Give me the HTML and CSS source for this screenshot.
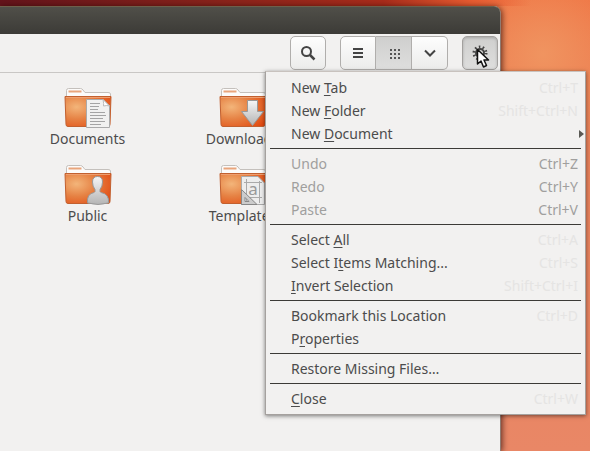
FILE: index.html
```html
<!DOCTYPE html>
<html lang="en">
<head>
    <meta charset="UTF-8">
    <meta name="viewport" content="width=device-width, initial-scale=1.0">
    <title>Files</title>
    <link rel="stylesheet" href="styles.css">
</head>
<body>
    <!-- shared folder shape and its gradients -->
    <svg class="defs" width="0" height="0" aria-hidden="true">
        <defs>
            <radialGradient id="orange" cx="0.25" cy="0.35" r="0.9">
                <stop offset="0" stop-color="#f3b57a"/>
                <stop offset="0.45" stop-color="#e68244"/>
                <stop offset="1" stop-color="#e2480f"/>
            </radialGradient>
            <linearGradient id="silver" x1="0" y1="0" x2="0" y2="1">
                <stop offset="0" stop-color="#f6f6f6"/>
                <stop offset="1" stop-color="#b4b4b4"/>
            </linearGradient>
            <symbol id="folder" viewBox="0 0 48 42">
                <path d="M2.500 10V3.500Q2.500 1.500 4.500 1.500H16.500Q18 1.500 19 3L21 5.500H44Q46.500 5.500 46.500 7V12H2.500Z" fill="#fcfbfa" stroke="#c4c0bc"/>
                <path d="M4.500 4.500h13" stroke="#e9a57c" stroke-width="2"/>
                <path d="M1 9.500H47L46 37.500Q46 39.500 44 39.500H4Q2 39.500 2 37.500Z" fill="url(#orange)" stroke="#c2602f"/>
                <path d="M2 10.500H46" stroke="#ee9f70"/>
            </symbol>
        </defs>
    </svg>

    <div class="window">
        <header class="titlebar"></header>

        <div class="toolbar">
            <button class="tool" aria-label="Search">
                <svg width="16" height="16" viewBox="0 0 16 16" fill="none" stroke="#444">
                    <circle cx="6.500" cy="6.500" r="4.500" stroke-width="2"/>
                    <path d="M10 10l4.500 4.500" stroke-width="2.500"/>
                </svg>
            </button>
            <div class="tool-group">
                <button class="tool" aria-label="List view">
                    <svg width="16" height="16" viewBox="0 0 16 16" fill="#444">
                        <path d="M3 3h10v2H3zM3 7h10v2H3zM3 11h10v2H3z"/>
                    </svg>
                </button>
                <button class="tool pressed" aria-label="Icon view">
                    <svg width="16" height="16" viewBox="0 0 16 16" fill="#555">
                        <path d="M4 4h2v2H4zM8 4h2v2H8zM12 4h2v2h-2zM4 8h2v2H4zM8 8h2v2H8zM12 8h2v2h-2zM4 12h2v2H4zM8 12h2v2H8zM12 12h2v2h-2z"/>
                    </svg>
                </button>
                <button class="tool" aria-label="View options">
                    <svg width="16" height="16" viewBox="0 0 16 16" fill="none" stroke="#444" stroke-width="2">
                        <path d="M3 5.500l5 5 5-5"/>
                    </svg>
                </button>
            </div>
            <div class="menu-anchor">
                <button class="tool pressed sunken" aria-label="Settings" aria-expanded="true">
                    <svg width="16" height="16" viewBox="0 0 16 16" fill="none" stroke="#444">
                        <circle cx="8" cy="8" r="4" stroke-width="2"/>
                        <circle cx="8" cy="8" r="6" stroke-width="3" stroke-dasharray="1.500 2.270"/>
                    </svg>
                </button>
                <svg class="pointer" width="14" height="21" viewBox="0 0 14 21">
                    <path d="M1.500 1.500V16L5 13L7.500 19L10.500 17.500L8 12H12.500Z" fill="#fff" stroke="#111" stroke-width="1.500" stroke-linejoin="round"/>
                </svg>

                <div class="menu">
                    <ul>
                        <li><button><span>New <u>T</u>ab</span><kbd>Ctrl+T</kbd></button></li>
                        <li><button><span>New <u>F</u>older</span><kbd>Shift+Ctrl+N</kbd></button></li>
                        <li><button><span>New <u>D</u>ocument</span><i class="submenu"></i></button></li>
                    </ul>
                    <ul>
                        <li><button disabled><span>Undo</span><kbd>Ctrl+Z</kbd></button></li>
                        <li><button disabled><span>Redo</span><kbd>Ctrl+Y</kbd></button></li>
                        <li><button disabled><span>Paste</span><kbd>Ctrl+V</kbd></button></li>
                    </ul>
                    <ul>
                        <li><button><span>Select <u>A</u>ll</span><kbd>Ctrl+A</kbd></button></li>
                        <li><button><span>Select I<u>t</u>ems Matching...</span><kbd>Ctrl+S</kbd></button></li>
                        <li><button><span><u>I</u>nvert Selection</span><kbd>Shift+Ctrl+I</kbd></button></li>
                    </ul>
                    <ul>
                        <li><button><span>Bookmark this Location</span><kbd>Ctrl+D</kbd></button></li>
                        <li><button><span>P<u>r</u>operties</span></button></li>
                    </ul>
                    <ul>
                        <li><button><span>Restore Missing Files…</span></button></li>
                    </ul>
                    <ul>
                        <li><button><span><u>C</u>lose</span><kbd>Ctrl+W</kbd></button></li>
                    </ul>
                </div>
            </div>
        </div>

        <main class="files">
            <a class="file" href="#documents">
                <svg width="48" height="42" viewBox="0 0 48 42">
                    <use href="#folder"/>
                    <path d="M22.500 12.500H39L45.500 19V40.500H22.500Z" fill="#f1f1f0" stroke="#aaa"/>
                    <path d="M39 12.500Q40 17 39.500 19Q43 18 45.500 19Z" fill="#fff" stroke="#bbb"/>
                    <path d="M26 16.500h10M26 19.500h9M26 22.500h8M26 25.500h15M26 28.500h16M26 31.500h13M26 34.500h15M26 37.500h11" stroke="#a4a4a4"/>
                </svg>
                <span>Documents</span>
            </a>
            <a class="file" href="#downloads">
                <svg width="48" height="42" viewBox="0 0 48 42">
                    <use href="#folder"/>
                    <path d="M28.500 13.500H38.500V24.500H44.500L33.500 38.500L22.500 24.500H28.500Z" fill="url(#silver)" stroke="#999"/>
                </svg>
                <span>Downloads</span>
            </a>
            <a class="file" href="#public">
                <svg width="48" height="42" viewBox="0 0 48 42">
                    <use href="#folder"/>
                    <path d="M23.500 39Q22.500 30 30 28.500Q31.500 28 31 25.500Q28.500 22.500 28.500 18Q28.500 12.500 33.500 12.500Q38.500 12.500 38.500 18Q38.500 22.500 36 25.500Q35.500 28 37 28.500Q45.500 30 44.500 39Q34 42 23.500 39Z" fill="url(#silver)" stroke="#999"/>
                </svg>
                <span>Public</span>
            </a>
            <a class="file" href="#templates">
                <svg width="48" height="42" viewBox="0 0 48 42">
                    <use href="#folder"/>
                    <path d="M22.500 12.500H39L45.500 19V40.500H22.500Z" fill="#ededed" stroke="#aaa"/>
                    <path d="M25 18.500h18M25 33.500h18M27.500 15v24M40.500 17v22" stroke="#aaa"/>
                    <text x="34" y="31" class="glyph">a</text>
                    <path d="M22.500 25.500L38 40.500H22.500ZM26 33.500L30 37.500H26Z" fill="#ccc" fill-rule="evenodd" stroke="#888"/>
                </svg>
                <span>Templates</span>
            </a>
        </main>
    </div>
</body>
</html>
```
FILE: styles.css
```css
* {
    box-sizing: border-box;
}

body {
    margin: 0;
    padding: 6px 89px 0 0;
    min-height: 100vh;
    display: flex;
    overflow: hidden;
    font-family: "Noto Sans", "Open Sans", sans-serif;
    font-size: 14px;
    color: #4c4c4c;
    /* wallpaper */
    background:
        linear-gradient(to right, #64141b 0, #8c241b 40%, #a92c1b 65%, #e85c31 80%, transparent 90%) top / 100% 6px no-repeat,
        radial-gradient(circle at 92% 12%, #f09460 0, transparent 100px),
        linear-gradient(#ef7040, #e9815a 30%, #e98766);
}

.defs {
    position: absolute;
}

.window {
    flex: 1;
    border-right: 1px solid #8e7b72;
    border-radius: 0 7px 0 0;
    background: #f2f1f0;
    box-shadow: 1px 1px 6px rgba(30, 0, 0, 0.7);
}

.titlebar {
    height: 28px;
    border-top: 1px solid #6d604b;
    border-radius: 0 6px 0 0;
    background: linear-gradient(#504f49, #3c3b37);
}

.toolbar {
    display: flex;
    justify-content: flex-end;
    gap: 14px;
    padding: 2px;
    border-bottom: 1px solid #c9c7c5;
}

.tool {
    display: flex;
    align-items: center;
    justify-content: center;
    width: 36px;
    height: 34px;
    padding: 0;
    border: 1px solid #b0aeac;
    border-radius: 5px;
    background: linear-gradient(#fdfdfd, #ececeb);
}

.tool-group {
    display: flex;
}

.tool-group .tool {
    border-radius: 0;
    border-left-width: 0;
}

.tool-group .tool:first-child {
    border-left-width: 1px;
    border-radius: 5px 0 0 5px;
}

.tool-group .tool:last-child {
    border-radius: 0 5px 5px 0;
}

.tool.pressed {
    background: linear-gradient(#cfcfce, #dededd);
}

.tool.sunken {
    border-color: #a3a19f;
    box-shadow: inset 0 1px 3px rgba(0, 0, 0, 0.2);
}

.menu-anchor {
    position: relative;
}

.pointer {
    position: absolute;
    z-index: 3;
    top: 12px;
    left: 14px;
}

.menu {
    position: absolute;
    z-index: 2;
    top: 35px;
    right: -88px;
    width: 321px;
    padding: 4px;
    border: 1px solid #a5a19e;
    border-top-color: #c8c2be;
    background: #f2f1f0;
    box-shadow: 0 1px 4px rgba(0, 0, 0, 0.5);
}

.menu ul {
    margin: 0;
    padding: 0;
    list-style: none;
}

.menu ul + ul {
    margin-top: 3px;
    padding-top: 3px;
    border-top: 1px solid #3c3b37;
}

.menu button {
    display: flex;
    align-items: center;
    justify-content: space-between;
    width: 100%;
    height: 23px;
    padding: 0 3px 0 21px;
    border: 0;
    background: none;
    font: inherit;
    color: inherit;
}

.menu button:disabled,
.menu button:disabled kbd {
    color: #a09f9e;
}

.menu u {
    text-underline-offset: 2px;
}

.menu kbd {
    font: inherit;
    color: #e5e4e3;
}

.submenu {
    margin-right: -6px;
    border: 4px solid transparent;
    border-left: 5px solid #5a5954;
    border-right: 0;
}

.files {
    display: grid;
    grid-template-columns: repeat(2, 155px);
    row-gap: 14px;
    padding: 14px 10px;
}

.file {
    display: flex;
    flex-direction: column;
    align-items: center;
    line-height: 21px;
    color: inherit;
    text-decoration: none;
}

.file span {
    margin-top: -1px;
    margin-bottom: 1px;
}

.glyph {
    font-size: 17px;
    text-anchor: middle;
    fill: #999;
}
```
